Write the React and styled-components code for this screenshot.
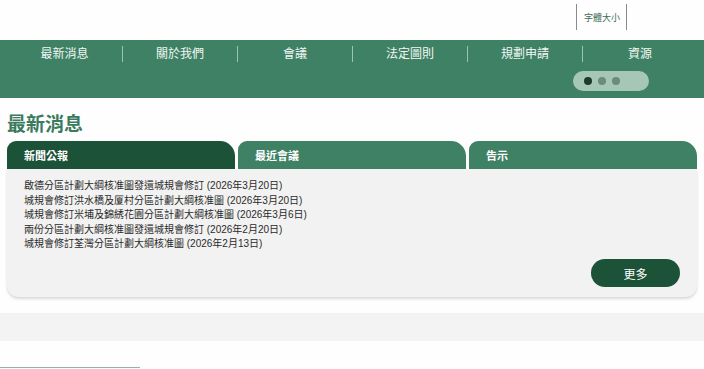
import React from 'react';
import styled, { createGlobalStyle } from 'styled-components';

const GlobalStyle = createGlobalStyle`
    html, body {
        margin: 0;
        padding: 0;
        background: #fdfefd;
        font-family: "Liberation Sans", "Noto Sans CJK TC", sans-serif;
    }
`;

const menuItems = ['最新消息', '關於我們', '會議', '法定圖則', '規劃申請', '資源'];
const tabs = ['新聞公報', '最近會議', '告示'];
const news = [
    '啟德分區計劃大綱核准圖發還城規會修訂 (2026年3月20日)',
    '城規會修訂洪水橋及厦村分區計劃大綱核准圖 (2026年3月20日)',
    '城規會修訂米埔及錦綉花園分區計劃大綱核准圖 (2026年3月6日)',
    '兩份分區計劃大綱核准圖發還城規會修訂 (2026年2月20日)',
    '城規會修訂荃灣分區計劃大綱核准圖 (2026年2月13日)',
];

const TopBar = styled.div`
    height: 40px;
    display: flex;
    justify-content: flex-end;
    align-items: flex-start;
    padding-right: 77px;
    padding-top: 4px;
    box-sizing: border-box;
`;

const FontSizeBox = styled.div`
    height: 26px;
    padding: 0 6px 0 7px;
    border-left: 1px solid #8a8a8a;
    border-right: 1px solid #8a8a8a;
    display: flex;
    align-items: center;
    font-size: 9px;
    color: #3d6b58;
`;

const Nav = styled.div`
    background: #3f8165;
    height: 58px;
    padding: 0 7px;
    display: flex;
    flex-direction: column;
`;

const Menu = styled.div`
    display: grid;
    grid-template-columns: repeat(6, 1fr);
    padding-top: 6px;
`;

const MenuItem = styled.div`
    text-align: center;
    color: #f2f7f4;
    font-size: 12px;
    line-height: 16px;
    border-left: ${p => (p.$first ? 'none' : '1px solid #9cc2b0')};
`;

const DotsRow = styled.div`
    display: flex;
    justify-content: flex-end;
    padding-right: 48px;
    margin-top: 9px;
`;

const Pill = styled.div`
    width: 76px;
    height: 20px;
    border-radius: 10px;
    background: #a6c7b5;
    display: flex;
    align-items: center;
    gap: 6px;
    padding-left: 11px;
    box-sizing: border-box;
`;

const Dot = styled.span`
    width: 8px;
    height: 8px;
    border-radius: 50%;
    background: ${p => (p.$active ? '#1e3a2e' : '#6e8a7c')};
`;

const Main = styled.div`
    padding: 0 7px;
`;

const Heading = styled.h2`
    margin: 0;
    padding-top: 15px;
    height: 43px;
    box-sizing: border-box;
    font-size: 19px;
    line-height: 24px;
    font-weight: bold;
    color: #3b7a5f;
`;

const Tabs = styled.div`
    display: grid;
    grid-template-columns: repeat(3, 1fr);
    gap: 3px;
`;

const Tab = styled.div`
    height: 28px;
    background: ${p => (p.$active ? '#1c5238' : '#3f8165')};
    border-radius: 9px 15px 0 0;
    color: #ffffff;
    font-size: 11px;
    font-weight: bold;
    padding-left: 17px;
    display: flex;
    align-items: center;
`;

const Panel = styled.div`
    background: #f1f2f1;
    border-radius: 0 0 12px 12px;
    box-shadow: 0 2px 3px rgba(0, 0, 0, 0.15);
    padding: 10px 17px 9px 17px;
    height: 128px;
    box-sizing: border-box;
    display: flex;
    flex-direction: column;
`;

const NewsList = styled.ul`
    list-style: none;
    margin: 0;
    padding: 0;
`;

const NewsItem = styled.li`
    font-size: 10px;
    line-height: 14.5px;
    color: #2b2b2b;
`;

const ButtonRow = styled.div`
    display: flex;
    justify-content: flex-end;
    margin-top: auto;
`;

const MoreButton = styled.button`
    width: 89px;
    height: 28px;
    border: none;
    border-radius: 14px;
    background: #1c5238;
    color: #ffffff;
    font-size: 12px;
    font-family: inherit;
    margin-bottom: 1px;
`;

const Band = styled.div`
    margin-top: 16px;
    height: 28px;
    background: #f2f3f2;
`;

const BottomLine = styled.div`
    margin-top: 26px;
    width: 140px;
    height: 1px;
    background: #93b3a5;
`;

export default function App() {
    return (
        <>
            <GlobalStyle />
            <TopBar>
                <FontSizeBox>字體大小</FontSizeBox>
            </TopBar>
            <Nav>
                <Menu>
                    {menuItems.map((m, i) => (
                        <MenuItem key={m} $first={i === 0}>{m}</MenuItem>
                    ))}
                </Menu>
                <DotsRow>
                    <Pill>
                        <Dot $active />
                        <Dot />
                        <Dot />
                    </Pill>
                </DotsRow>
            </Nav>
            <Main>
                <Heading>最新消息</Heading>
                <Tabs>
                    {tabs.map((t, i) => (
                        <Tab key={t} $active={i === 0}>{t}</Tab>
                    ))}
                </Tabs>
                <Panel>
                    <NewsList>
                        {news.map(n => (
                            <NewsItem key={n}>{n}</NewsItem>
                        ))}
                    </NewsList>
                    <ButtonRow>
                        <MoreButton>更多</MoreButton>
                    </ButtonRow>
                </Panel>
            </Main>
            <Band />
            <BottomLine />
        </>
    );
}
